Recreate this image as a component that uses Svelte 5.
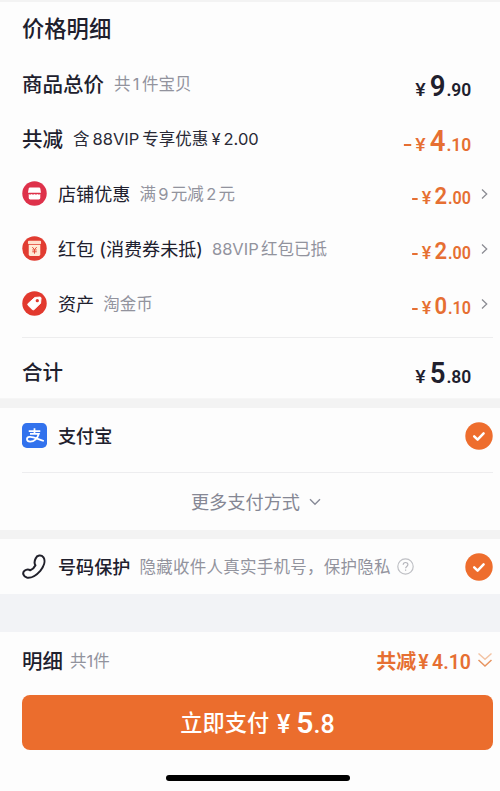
<script>
	const discounts = [
		{ icon: "shop", name: "店铺优惠", note: "满 9 元减 2 元", whole: "2", cents: ".00" },
		{ icon: "packet", name: "红包 (消费券未抵)", note: "88VIP 红包已抵", whole: "2", cents: ".00" },
		{ icon: "tag", name: "资产", note: "淘金币", whole: "0", cents: ".10" },
	];
</script>

{#snippet check()}
	<svg class="check" viewBox="0 0 28 28">
		<circle cx="14" cy="14" r="13.7" fill="#ee6d2d" />
		<path d="M9.2 14.3l3.4 3.3 6-6.2" fill="none" stroke="#fff" stroke-width="2.5" stroke-linecap="round" stroke-linejoin="round" />
	</svg>
{/snippet}

<main class="sheet">
	<section class="prices">
		<h1>价格明细</h1>
		<div class="row">
			<span class="label">商品总价</span>
			<span class="note">共 1 件宝贝</span>
			<span class="amount"><span class="yen">¥</span><b>9</b><span>.90</span></span>
		</div>
		<div class="row">
			<span class="label">共减</span>
			<span class="note dark">含 88VIP 专享优惠 ¥ 2.00</span>
			<span class="amount orange"><i></i><span class="yen">¥</span><b>4</b><span>.10</span></span>
		</div>
		{#each discounts as item}
			<div class="row">
				<svg class="icon" viewBox="0 0 26 26">
					{#if item.icon === "shop"}
						<circle cx="13" cy="13" r="12.7" fill="#de314a" />
						<path d="M8.2 6.8h9.6q1 0 1.2 1l.8 4.3H6.2L7 7.8q.2-1 1.2-1z" fill="#fff" />
						<path d="M7 13.5q1.5 1.2 3 0 1.5 1.2 3 0 1.5 1.2 3 0 1.5 1.2 3 0v4.2q0 1.5-1.5 1.5h-9Q7 19.2 7 17.7z" fill="#fff" />
					{:else if item.icon === "packet"}
						<circle cx="13" cy="13" r="12.7" fill="#e13c31" />
						<rect x="6.2" y="5" width="13.6" height="3.5" rx="1" fill="#ffdfcc" />
						<path d="M7 9.3h12v9.9q0 1.5-1.5 1.5h-9Q7 20.7 7 19.2z" fill="#ffead5" />
						<path d="M10.7 11.5l2.3 2.7 2.3-2.7M10.700 14.500h4.600M10.700 16.400h4.600M13 14.200v4.200" fill="none" stroke="#e34a36" stroke-width="1" />
					{:else}
						<circle cx="13" cy="13" r="12.7" fill="#e2392e" />
						<path d="M13.3 6.7l5.2-.4q1.3 0 1.3 1.3l-.5 5.2-6.6 6.4q-1 .9-2 0l-4.3-4.2q-.9-1 0-2z" fill="#fff" stroke="#fff" stroke-linejoin="round" />
						<circle cx="15.9" cy="10.1" r="1.7" fill="#e2392e" />
					{/if}
				</svg>
				<span class="name">{item.name}</span>
				<span class="note">{item.note}</span>
				<span class="amount orange small"><i></i><span class="yen">¥</span><b>{item.whole}</b><span>{item.cents}</span></span>
				<svg class="arrow" viewBox="0 0 7 12"><path d="M1 1.5L5.7 6 1 10.5" fill="none" stroke="#8c8d94" stroke-width="1.3" /></svg>
			</div>
		{/each}
		<div class="row total">
			<span class="label">合计</span>
			<span class="amount"><span class="yen">¥</span><b>5</b><span>.80</span></span>
		</div>
	</section>

	<section class="payment">
		<div class="method">
			<svg class="icon" viewBox="0 0 26 26">
				<rect width="26" height="26" rx="5" fill="#3272ed" />
				<path d="M7 8.400h12M13 5.500v5.700M8.300 11.300h9.200C16 16 12.500 19.300 8.500 19.300c-4.200 0-4.500-4.400-.6-4.800 4.500-.4 8.500 2.500 14.800 4.200" fill="none" stroke="#fff" stroke-width="1.800" />
			</svg>
			<span class="name strong">支付宝</span>
			{@render check()}
		</div>
		<div class="more">
			<span>更多支付方式</span>
			<svg viewBox="0 0 12 8"><path d="M1 1.300l5 5 5-5" fill="none" stroke="#888b98" stroke-width="1.400" /></svg>
		</div>
	</section>

	<section class="privacy">
		<svg class="icon" viewBox="0 0 26 26">
			<path d="M14.300 4.500C15.500 1.300 20 .5 22.300 3.400c2.500 3.800.2 9.800-3.300 14.100-3.500 4.100-9.300 8-14 7C1.700 23.700-.1 19.700 2.600 17.500c2-1.700 3.900-1.800 6-.6 2.200-.8 4.300-2.900 5.400-5.200-1.500-2-1-4.700.3-7.200z" fill="none" stroke="#20202a" stroke-width="2.100" stroke-linejoin="round" />
		</svg>
		<span class="name strong">号码保护</span>
		<span class="note hint">隐藏收件人真实手机号，保护隐私</span>
		<svg class="help" viewBox="0 0 17 17">
			<circle cx="8.5" cy="8.5" r="7.7" fill="none" stroke="#bfc0c5" stroke-width="1.2" />
			<path d="M6.200 6.800c0-3 4.700-3 4.700-.2 0 1.800-2.300 1.900-2.300 3.700M8.600 11.500v1.300" fill="none" stroke="#b4b5bb" stroke-width="1.200" />
		</svg>
		{@render check()}
	</section>

	<footer>
		<div class="summary">
			<span class="label">明细</span>
			<span class="note">共1件</span>
			<span class="saved">共减 <span class="num">¥ 4.10</span></span>
			<svg class="down" viewBox="0 0 16 16">
				<path d="M1.500 1.500L8 7.300l6.500-5.800" fill="none" stroke="#f3c4a5" stroke-width="1.500" />
				<path d="M1.500 8L8 14l6.500-6" fill="none" stroke="#e79460" stroke-width="1.500" />
			</svg>
		</div>
		<button><span>立即支付</span> <span class="pay"><span>¥</span><b>5</b><span>.8</span></span></button>
		<div class="home"></div>
	</footer>
</main>

<style>
	:global(body) {
		margin: 0;
	}
	.sheet {
		box-sizing: border-box;
		width: 500px;
		height: 791px;
		overflow: hidden;
		background: #fdfdfd;
		border-top: 2px solid #f3f3f3;
		color: #20202d;
		font-family: Inter, "Noto Sans CJK SC", sans-serif;
		white-space: nowrap;
	}
	.prices {
		box-sizing: border-box;
		height: 397px;
		border-bottom: 1px solid #f6f6f6;
	}
	h1 {
		margin: 0;
		padding-left: 22px;
		height: 54px;
		font-size: 22.3px;
		font-weight: 500;
		line-height: 54px;
	}
	.row,
	.method,
	.privacy,
	.summary {
		display: flex;
		align-items: center;
		height: 55px;
		padding-left: 22px;
	}
	.row {
		position: relative;
		padding-right: 29px;
	}
	.label,
	.name,
	.note {
		padding-bottom: 1px;
	}
	.label {
		font-size: 20.5px;
		font-weight: 500;
	}
	.icon {
		width: 25px;
		height: 25px;
		margin-right: 11px;
		flex: none;
	}
	.name {
		font-size: 18.1px;
	}
	.strong {
		font-weight: 500;
	}
	.note {
		margin-left: 10px;
		color: #92939d;
		font-size: 16.5px;
		word-spacing: -2.3px;
	}
	.name + .note {
		margin-left: 9px;
	}
	.dark {
		color: #292a36;
		word-spacing: -1.6px;
	}
	.hint {
		letter-spacing: 0.25px;
	}
	.amount {
		display: flex;
		align-items: baseline;
		margin-left: auto;
		padding-top: 8px;
		font-family: Roboto, sans-serif;
		font-size: 19px;
		font-weight: 600;
		line-height: 30px;
		transform: scaleX(0.92);
		transform-origin: right;
	}
	.amount b {
		margin-right: 1px;
		font-size: 30px;
		font-weight: 600;
	}
	.amount .yen {
		margin-right: 5px;
		font-size: 19px;
		font-weight: 500;
		transform: scaleX(1.12);
	}
	.amount i {
		align-self: center;
		width: 8px;
		height: 2px;
		margin: 4px 5px 0 0;
		background: currentColor;
	}
	.orange {
		color: #e66f32;
	}
	.small {
		padding-top: 6px;
		font-size: 17.5px;
	}
	.small b {
		font-size: 24px;
	}
	.small .yen {
		margin-right: 4px;
		font-size: 17.5px;
	}
	.small i {
		width: 6px;
	}
	.arrow {
		position: absolute;
		right: 12px;
		width: 7px;
		height: 12px;
	}
	.total {
		margin: 6px 7px 0 22px;
		height: 69px;
		padding: 0 22px 0 0;
		border-top: 1px solid #ededee;
	}
	.total .label {
		padding-bottom: 4px;
	}
	.total .amount {
		padding-top: 5px;
	}
	.payment {
		box-sizing: border-box;
		height: 140px;
		border: solid #f3f3f3;
		border-width: 9px 0;
	}
	.method {
		height: 55px;
		margin: 0 7px 0 22px;
		padding: 0 0 9px;
		border-bottom: 1px solid #ededef;
	}
	.check {
		width: 28px;
		height: 28px;
		margin-left: auto;
		flex: none;
	}
	.more {
		display: flex;
		align-items: center;
		justify-content: center;
		gap: 9px;
		height: 58px;
		padding-left: 12px;
		color: #858794;
		font-size: 18.2px;
	}
	.more span {
		padding-bottom: 2px;
	}
	.more svg {
		width: 12px;
		height: 8px;
	}
	.privacy {
		padding-right: 7px;
		border-bottom: 38px solid #f2f3f6;
	}
	.help {
		width: 17px;
		height: 17px;
		margin-left: 6px;
	}
	.summary {
		padding-right: 7px;
		height: 56px;
	}
	.summary .note {
		margin-left: 7px;
	}
	.saved {
		margin-left: auto;
		color: #e66f32;
		font-size: 20px;
		font-weight: 600;
		word-spacing: -3px;
	}
	.num {
		font-family: Roboto, sans-serif;
		font-size: 19.5px;
		word-spacing: -1.5px;
	}
	.down {
		width: 16px;
		height: 16px;
		margin-left: 6px;
	}
	button {
		display: flex;
		align-items: center;
		justify-content: center;
		width: 471px;
		height: 55px;
		margin: 7px 0 0 22px;
		padding: 0;
		border: 0;
		border-radius: 8px;
		background: #eb6d2d;
		color: #fff;
		font-family: inherit;
		font-size: 22.2px;
		font-weight: 500;
	}
	button > span:first-child {
		padding-bottom: 3px;
	}
	.pay {
		display: flex;
		align-items: baseline;
		margin-left: 8px;
		font-family: Roboto, sans-serif;
		font-size: 25px;
	}
	.pay b {
		margin-left: 6px;
		font-size: 30px;
		font-weight: 600;
	}
	.home {
		width: 184px;
		height: 6px;
		margin: 25px 0 0 166px;
		border-radius: 3px;
		background: #000;
	}
</style>
